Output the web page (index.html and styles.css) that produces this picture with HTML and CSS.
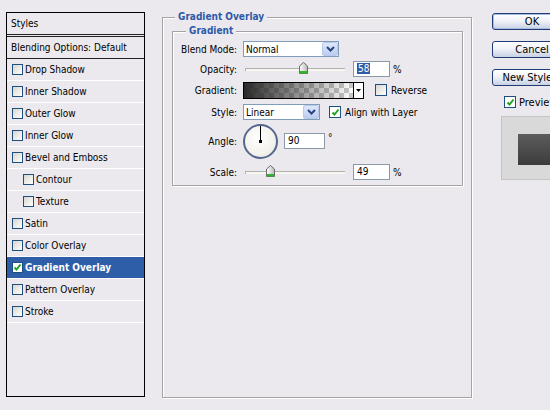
FILE: index.html
```html
<!DOCTYPE html>
<html>
<head>
<meta charset="utf-8">
<link rel="stylesheet" href="styles.css">
</head>
<body>
<div class="dialog">
  <div class="styles-panel">
    <div class="panel-hdr">Styles</div>
    <div class="panel-blend">Blending Options: Default</div>
    <ul class="fx-list">
      <li class="fx"><span class="cb"></span>Drop Shadow</li>
      <li class="fx"><span class="cb"></span>Inner Shadow</li>
      <li class="fx"><span class="cb"></span>Outer Glow</li>
      <li class="fx"><span class="cb"></span>Inner Glow</li>
      <li class="fx"><span class="cb"></span>Bevel and Emboss</li>
      <li class="fx sub"><span class="cb"></span>Contour</li>
      <li class="fx sub"><span class="cb"></span>Texture</li>
      <li class="fx"><span class="cb"></span>Satin</li>
      <li class="fx"><span class="cb"></span>Color Overlay</li>
      <li class="fx selected"><span class="cb on"><svg viewBox="0 0 9 9" width="9" height="9"><polyline points="1.5,4.5 3.5,6.5 7.5,1.5" fill="none" stroke="#21a321" stroke-width="2"/></svg></span>Gradient Overlay</li>
      <li class="fx"><span class="cb"></span>Pattern Overlay</li>
      <li class="fx"><span class="cb"></span>Stroke</li>
    </ul>
  </div>

  <fieldset class="group outer">
    <legend>Gradient Overlay</legend>
    <fieldset class="group inner">
      <legend>Gradient</legend>
      <div class="form">
        <div class="row r-blend">
          <span class="lbl">Blend Mode:</span>
          <div class="select sel-blend"><span class="sel-text">Normal</span><span class="sel-btn"><svg viewBox="0 0 9 6" width="9" height="6"><polyline points="1,1 4.5,4.5 8,1" fill="none" stroke="#27457f" stroke-width="2"/></svg></span></div>
        </div>
        <div class="row r-opacity">
          <span class="lbl">Opacity:</span>
          <div class="slider"><div class="track"></div><span class="thumb" style="left:58%"><svg viewBox="0 0 9 12" width="9" height="12"><defs><linearGradient id="tg1" x1="0" y1="0" x2="1" y2="0"><stop offset="0" stop-color="#ffffff"/><stop offset="1" stop-color="#b8b8b8"/></linearGradient></defs><path d="M0.5 4 L4.5 0.5 L8.5 4 L8.5 11.5 L0.5 11.5 Z" fill="url(#tg1)" stroke="#6b6b6b"/><rect x="1" y="9" width="7" height="2.5" fill="#2db52d"/></svg></span></div>
          <div class="num"><span class="hl">58</span></div>
          <span class="unit">%</span>
        </div>
        <div class="row r-gradient">
          <span class="lbl">Gradient:</span>
          <div class="grad"><div class="grad-fill"></div><span class="grad-btn"><svg viewBox="0 0 5 3" width="5" height="3"><polygon points="0,0 5,0 2.5,3" fill="#000"/></svg></span></div>
          <span class="cb big"></span><span class="cb-label">Reverse</span>
        </div>
        <div class="row r-style">
          <span class="lbl">Style:</span>
          <div class="select sel-style"><span class="sel-text">Linear</span><span class="sel-btn"><svg viewBox="0 0 9 6" width="9" height="6"><polyline points="1,1 4.5,4.5 8,1" fill="none" stroke="#27457f" stroke-width="2"/></svg></span></div>
          <span class="cb big on"><svg viewBox="0 0 9 9" width="9" height="9"><polyline points="1.5,4.5 3.5,6.5 7.5,1.5" fill="none" stroke="#21a321" stroke-width="2"/></svg></span><span class="cb-label">Align with Layer</span>
        </div>
        <div class="row r-angle">
          <span class="lbl">Angle:</span>
          <div class="dial"><span class="dial-hand"></span><span class="dial-dot"></span></div>
          <div class="num num-angle">90</div>
          <span class="deg">°</span>
        </div>
        <div class="row r-scale">
          <span class="lbl">Scale:</span>
          <div class="slider"><div class="track"></div><span class="thumb" style="left:24.5%"><svg viewBox="0 0 9 12" width="9" height="12"><defs><linearGradient id="tg2" x1="0" y1="0" x2="1" y2="0"><stop offset="0" stop-color="#ffffff"/><stop offset="1" stop-color="#b8b8b8"/></linearGradient></defs><path d="M0.5 4 L4.5 0.5 L8.5 4 L8.5 11.5 L0.5 11.5 Z" fill="url(#tg2)" stroke="#6b6b6b"/><rect x="1" y="9" width="7" height="2.5" fill="#2db52d"/></svg></span></div>
          <div class="num">49</div>
          <span class="unit">%</span>
        </div>
      </div>
    </fieldset>
  </fieldset>

  <div class="actions">
    <button class="btn default">OK</button>
    <button class="btn">Cancel</button>
    <button class="btn">New Style...</button>
    <div class="preview-check"><span class="cb big on"><svg viewBox="0 0 9 9" width="9" height="9"><polyline points="1.5,4.5 3.5,6.5 7.5,1.5" fill="none" stroke="#21a321" stroke-width="2"/></svg></span><span class="cb-label">Preview</span></div>
    <div class="preview-box"><div class="preview-swatch"></div></div>
  </div>
</div>
</body>
</html>
```
FILE: styles.css
```css
html, body {
  margin: 0;
  padding: 0;
}
body {
  width: 550px;
  height: 410px;
  overflow: hidden;
  background: #ebe9ed;
  font-family: "DejaVu Sans Condensed", "Liberation Sans", sans-serif;
  font-size: 10px;
  color: #000;
}
.dialog {
  display: flex;
  align-items: flex-start;
  padding-left: 6px;
}

/* left styles list */
.styles-panel {
  margin-top: 12px;
  width: 139px;
  height: 385px;
  box-sizing: border-box;
  border: 1px solid #000;
  flex: none;
}
.panel-hdr {
  height: 21px;
  line-height: 21px;
  padding-left: 4px;
  border-bottom: 3px double #222;
}
.panel-blend {
  height: 21px;
  line-height: 21px;
  padding-left: 4px;
  border-bottom: 1px solid #222;
}
.fx-list {
  list-style: none;
  margin: 0;
  padding: 0;
}
.fx {
  height: 21px;
  border-bottom: 1px solid #fff;
  display: flex;
  align-items: center;
  padding-left: 5px;
}
.fx.sub {
  padding-left: 16px;
}
.fx .cb {
  margin-right: 2px;
}
.fx.selected {
  background: #2f5ea8;
  color: #fff;
  font-weight: bold;
}

/* checkbox */
.cb {
  width: 11px;
  height: 11px;
  box-sizing: border-box;
  border: 1px solid #1d4f7f;
  background: linear-gradient(135deg, #d8d6cf 0%, #f4f3ef 70%, #ffffff 100%);
  display: inline-flex;
  align-items: center;
  justify-content: center;
  flex: none;
}
.cb.on {
  background: #fff;
}
.cb.big {
  width: 12px;
  height: 12px;
}
.cb-label {
  margin-left: 4px;
  white-space: nowrap;
}

/* group boxes */
.group {
  margin: 0;
  padding: 0;
  border: 1px solid #a4a4a4;
  box-shadow: 1px 1px 0 #fff, inset 1px 1px 0 #fff;
  min-width: 0;
}
.group legend {
  color: #2c5aa8;
  font-weight: bold;
  padding: 0 3px;
  line-height: 12px;
  background: #ebe9ed;
}
.outer {
  margin-top: 11px;
  margin-left: 17px;
  width: 310px;
  height: 387px;
  box-sizing: border-box;
  flex: none;
}
.outer > legend {
  margin-left: 12px;
}
.inner {
  margin: 2px 8px 0 9px;
  padding-bottom: 5px;
}
.inner > legend {
  margin-left: 13px;
}

/* form */
.form {
  padding-top: 4px;
  display: flex;
  flex-direction: column;
}
.row {
  display: flex;
  align-items: center;
  height: 16px;
}
.r-opacity { margin-top: 4px; }
.r-gradient { margin-top: 5px; }
.r-style { margin-top: 6px; }
.r-angle { margin-top: 3px; height: 36px; }
.r-scale { margin-top: 5px; }
.lbl {
  width: 64px;
  margin-right: 6px;
  text-align: right;
  flex: none;
}

.select {
  height: 16px;
  box-sizing: border-box;
  border: 1px solid #7f9db9;
  background: #fff;
  display: flex;
  align-items: center;
  flex: none;
}
.sel-blend { width: 96px; }
.sel-style { width: 77px; }
.sel-text {
  flex: 1;
  padding-left: 2px;
}
.sel-btn {
  width: 16px;
  height: 14px;
  box-sizing: border-box;
  border: 1px solid #b9c9ec;
  border-radius: 2px;
  background: linear-gradient(#dfe8fb, #bccdf1);
  display: flex;
  align-items: center;
  justify-content: center;
}

.slider {
  position: relative;
  width: 100px;
  height: 16px;
  margin-left: 2px;
  flex: none;
}
.track {
  position: absolute;
  left: 0;
  right: 0;
  top: 7px;
  height: 3px;
  box-sizing: border-box;
  border-top: 1px solid #b0b0b0;
  border-left: 1px solid #b0b0b0;
  background: #f7f6ef;
}
.thumb {
  position: absolute;
  top: 1px;
  width: 9px;
  height: 12px;
  margin-left: -4px;
  display: block;
}
.thumb svg { display: block; }

.num {
  width: 37px;
  height: 16px;
  box-sizing: border-box;
  border: 1px solid #8a9aa9;
  background: #fff;
  margin-left: 8px;
  padding-left: 3px;
  line-height: 14px;
  flex: none;
}
.hl {
  background: #2f5ea8;
  color: #fff;
  padding: 0 1px;
}
.unit {
  margin-left: 3px;
}

.grad {
  width: 121px;
  height: 17px;
  box-sizing: border-box;
  border: 1px solid #000;
  display: flex;
  flex: none;
}
.grad-fill {
  flex: 1;
  background:
    linear-gradient(to right, #2a2a2a 0%, rgba(42,42,42,0) 100%),
    repeating-conic-gradient(#c8c8c8 0 25%, #ffffff 0 50%) 0 0 / 10px 10px;
}
.grad-btn {
  width: 9px;
  border-left: 1px solid #000;
  background: #fff;
  display: flex;
  align-items: center;
  justify-content: center;
}
.r-gradient .cb {
  margin-left: 11px;
}
.r-style .cb {
  margin-left: 9px;
}

.dial {
  position: relative;
  width: 35px;
  height: 35px;
  box-sizing: border-box;
  border: 2px solid #55678f;
  border-radius: 50%;
  background: radial-gradient(circle at 45% 40%, #ffffff 0%, #f3f2ec 60%, #e0ded6 100%);
  flex: none;
}
.dial-hand {
  position: absolute;
  left: 15px;
  top: 0;
  width: 1px;
  height: 15px;
  background: #000;
}
.dial-dot {
  position: absolute;
  left: 14px;
  top: 14px;
  width: 3px;
  height: 3px;
  background: #000;
}
.num-angle {
  width: 41px;
  margin-left: 6px;
}
.deg {
  margin-left: 3px;
  align-self: flex-start;
  margin-top: 9px;
}

/* right actions */
.actions {
  margin-left: 20px;
  margin-top: 13px;
  display: flex;
  flex-direction: column;
  align-items: flex-start;
  flex: none;
  width: 90px;
}
.btn {
  width: 80px;
  height: 17px;
  margin: 0 0 11px 0;
  padding: 0;
  box-sizing: border-box;
  border: 1px solid #1f3d74;
  border-radius: 3px;
  background: linear-gradient(#ffffff 0%, #f1f3f8 45%, #c7d1e4 100%);
  font-family: "DejaVu Sans Condensed", "Liberation Sans", sans-serif;
  font-size: 11px;
  color: #000;
  line-height: 15px;
  text-align: center;
  white-space: nowrap;
}
.btn.default {
  box-shadow: inset 0 0 0 1px #a9bde2;
}
.preview-check {
  display: flex;
  align-items: center;
  margin-left: 12px;
  margin-top: -1px;
  height: 12px;
  font-size: 11px;
}
.preview-check .cb-label { margin-left: 3px; }
.preview-box {
  margin-top: 8px;
  margin-left: 9px;
  width: 70px;
  height: 64px;
  box-sizing: border-box;
  border: 1px solid #c4c4c4;
  background: #d9d9d9;
  padding: 17px 0 0 16px;
}
.preview-swatch {
  width: 36px;
  height: 31px;
  background: linear-gradient(#5c5c5c, #3c3c3c);
}
```
